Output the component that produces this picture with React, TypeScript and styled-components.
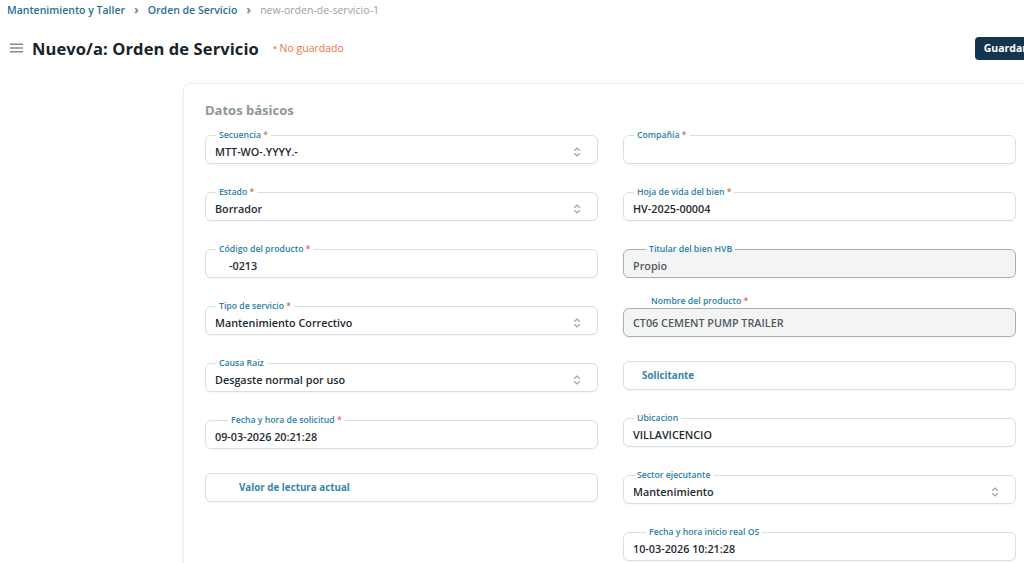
import React from "react";
import styled, { createGlobalStyle } from "styled-components";

const GlobalStyle = createGlobalStyle`
  html, body {
    margin: 0;
    padding: 0;
    background: #ffffff;
    overflow: hidden;
  }
  body {
    font-family: "Open Sans", "Liberation Sans", sans-serif;
    color: #1d2a31;
  }
  * {
    box-sizing: border-box;
  }
`;

type FieldDef = {
  label?: string;
  required?: boolean;
  value?: string;
  placeholder?: string;
  select?: boolean;
  readOnly?: boolean;
  detached?: boolean;
  legendOffset?: number;
  indent?: number;
};

const leftFields: FieldDef[] = [
  { label: "Secuencia", required: true, value: "MTT-WO-.YYYY.-", select: true },
  { label: "Estado", required: true, value: "Borrador", select: true },
  { label: "Código del producto", required: true, value: "-0213", indent: 23 },
  { label: "Tipo de servicio", required: true, value: "Mantenimiento Correctivo", select: true },
  { label: "Causa Raiz", value: "Desgaste normal por uso", select: true },
  { label: "Fecha y hora de solicitud", required: true, value: "09-03-2026 20:21:28", legendOffset: 22 },
  { placeholder: "Valor de lectura actual", indent: 33 },
];

const rightFields: FieldDef[] = [
  { label: "Compañía", required: true },
  { label: "Hoja de vida del bien", required: true, value: "HV-2025-00004" },
  { label: "Titular del bien HVB", value: "Propio", readOnly: true, legendOffset: 22 },
  { label: "Nombre del producto", required: true, value: "CT06 CEMENT PUMP TRAILER", readOnly: true, detached: true },
  { placeholder: "Solicitante", indent: 18 },
  { label: "Ubicacion", value: "VILLAVICENCIO" },
  { label: "Sector ejecutante", value: "Mantenimiento", select: true },
  { label: "Fecha y hora inicio real OS", value: "10-03-2026 10:21:28", legendOffset: 22 },
];

const SelectArrows = () => (
  <svg width="8" height="12" viewBox="0 0 8 12" fill="none">
    <path d="M1.5 4.5 L4 2 L6.5 4.5" stroke="#9aa4a9" strokeWidth="1.1" strokeLinecap="round" strokeLinejoin="round" />
    <path d="M1.5 7.5 L4 10 L6.5 7.5" stroke="#9aa4a9" strokeWidth="1.1" strokeLinecap="round" strokeLinejoin="round" />
  </svg>
);

const MenuIcon = () => (
  <svg width="13" height="10" viewBox="0 0 13 10">
    <rect x="0" y="0.5" width="13" height="1.4" fill="#7b8388" />
    <rect x="0" y="4.3" width="13" height="1.4" fill="#7b8388" />
    <rect x="0" y="8.1" width="13" height="1.4" fill="#7b8388" />
  </svg>
);

const Field = ({ f }: { f: FieldDef }) => {
  const label = f.label && (
    <>
      {f.label}
      {f.required && <Star> *</Star>}
    </>
  );

  if (f.detached) {
    return (
      <DetachedWrap>
        <DetachedLabel $offset={f.legendOffset ?? 28}>{label}</DetachedLabel>
        <Box $readOnly={f.readOnly}>
          <Value $indent={f.indent ?? 9} $muted={f.readOnly}>{f.value}</Value>
        </Box>
      </DetachedWrap>
    );
  }

  if (!f.label) {
    return (
      <Box>
        <Placeholder $indent={f.indent ?? 10}>{f.placeholder}</Placeholder>
      </Box>
    );
  }

  return (
    <Outline $readOnly={f.readOnly}>
      <Legend $offset={f.legendOffset ?? 10}>{label}</Legend>
      <Row>
        <Value $indent={f.indent ?? 9} $muted={f.readOnly}>{f.value ?? ""}</Value>
        {f.select && (
          <Arrows>
            <SelectArrows />
          </Arrows>
        )}
      </Row>
    </Outline>
  );
};

export default function App() {
  return (
    <Page>
      <GlobalStyle />
      <Breadcrumb>
        <Crumb>Mantenimiento y Taller</Crumb>
        <Sep>›</Sep>
        <Crumb>Orden de Servicio</Crumb>
        <Sep>›</Sep>
        <CurrentCrumb>new-orden-de-servicio-1</CurrentCrumb>
      </Breadcrumb>

      <Header>
        <MenuIcon />
        <Title>Nuevo/a: Orden de Servicio</Title>
        <Status>• No guardado</Status>
        <Spacer />
        <SaveButton>Guardar</SaveButton>
      </Header>

      <Body>
        <Card>
          <SectionTitle>Datos básicos</SectionTitle>
          <Columns>
            <Column>
              {leftFields.map((f, i) => (
                <Field key={i} f={f} />
              ))}
            </Column>
            <Column>
              {rightFields.map((f, i) => (
                <Field key={i} f={f} />
              ))}
            </Column>
          </Columns>
        </Card>
      </Body>
    </Page>
  );
}

const Page = styled.div`
  width: 1024px;
  height: 563px;
  overflow: hidden;
`;

const Breadcrumb = styled.nav`
  display: flex;
  align-items: center;
  gap: 9px;
  height: 20px;
  padding: 0 0 0 7px;
  font-size: 10.5px;
  font-weight: 600;
`;

const Crumb = styled.span`
  color: #2b6f8f;
`;

const Sep = styled.span`
  color: #7d868b;
  font-size: 13px;
  font-weight: 700;
  margin-top: -2px;
`;

const CurrentCrumb = styled.span`
  color: #9aa1a5;
  font-weight: 500;
`;

const Header = styled.header`
  display: flex;
  align-items: center;
  height: 36px;
  margin-top: 10px;
  padding-left: 10px;
`;

const Title = styled.h1`
  margin: 0 0 0 9px;
  font-size: 16.5px;
  font-weight: 700;
  color: #17232a;
  letter-spacing: 0.1px;
`;

const Status = styled.span`
  margin-left: 14px;
  font-size: 10.5px;
  font-weight: 500;
  color: #e8763a;
`;

const Spacer = styled.div`
  flex: 1;
`;

const SaveButton = styled.button`
  height: 23px;
  margin-right: -12px;
  padding: 0 9px;
  border: none;
  border-radius: 4px;
  background: #14344f;
  color: #ffffff;
  font-family: inherit;
  font-size: 10.5px;
  font-weight: 700;
`;

const Body = styled.main`
  padding: 17px 0 0 183px;
`;

const Card = styled.section`
  width: 853px;
  padding: 17px 21px 30px;
  border: 1px solid #eceeef;
  border-radius: 7px;
  background: #ffffff;
  box-shadow: 0 2px 8px rgba(20, 40, 50, 0.04);
`;

const SectionTitle = styled.h2`
  margin: 0 0 12px;
  font-size: 13px;
  font-weight: 700;
  color: #8d979c;
`;

const Columns = styled.div`
  display: grid;
  grid-template-columns: 393px 393px;
  column-gap: 25px;
  align-items: start;
`;

const Column = styled.div`
  display: flex;
  flex-direction: column;
  gap: 24px;
`;

const Outline = styled.fieldset<{ $readOnly?: boolean }>`
  margin: 0;
  padding: 0 16px 0 0;
  height: 33px;
  border: 1px solid ${({ $readOnly }) => ($readOnly ? "#a9b0b4" : "#d8dee1")};
  border-radius: 6px;
  background: ${({ $readOnly }) => ($readOnly ? "#f3f4f4" : "#ffffff")};
  box-shadow: 0 1px 2px rgba(0, 0, 0, 0.04);
  min-width: 0;
`;

const Legend = styled.legend<{ $offset: number }>`
  margin-left: ${({ $offset }) => $offset}px;
  padding: 0 3px;
  font-size: 8.7px;
  line-height: 9px;
  font-weight: 600;
  color: #2d80a6;
`;

const Star = styled.span`
  color: #e0675a;
`;

const Row = styled.div`
  display: flex;
  align-items: center;
  height: 22px;
  padding-top: 1px;
`;

const Value = styled.div<{ $indent: number; $muted?: boolean }>`
  flex: 1;
  padding-left: ${({ $indent }) => $indent}px;
  font-size: 10.8px;
  font-weight: 600;
  color: ${({ $muted }) => ($muted ? "#50595e" : "#1d2a31")};
  white-space: nowrap;
`;

const Arrows = styled.div`
  display: flex;
  align-items: center;
`;

const Box = styled.div<{ $readOnly?: boolean }>`
  display: flex;
  align-items: center;
  height: 29px;
  border: 1px solid ${({ $readOnly }) => ($readOnly ? "#a9b0b4" : "#d8dee1")};
  border-radius: 6px;
  background: ${({ $readOnly }) => ($readOnly ? "#f3f4f4" : "#ffffff")};
  box-shadow: 0 1px 2px rgba(0, 0, 0, 0.04);
`;

const Placeholder = styled.div<{ $indent: number }>`
  padding-left: ${({ $indent }) => $indent}px;
  font-size: 9.8px;
  font-weight: 700;
  color: #3784aa;
`;

const DetachedWrap = styled.div`
  display: flex;
  flex-direction: column;
  margin-top: -5px;
`;

const DetachedLabel = styled.label<{ $offset: number }>`
  padding-left: ${({ $offset }) => $offset}px;
  height: 9px;
  margin-bottom: 2px;
  font-size: 8.7px;
  line-height: 9px;
  font-weight: 600;
  color: #2d80a6;
`;
